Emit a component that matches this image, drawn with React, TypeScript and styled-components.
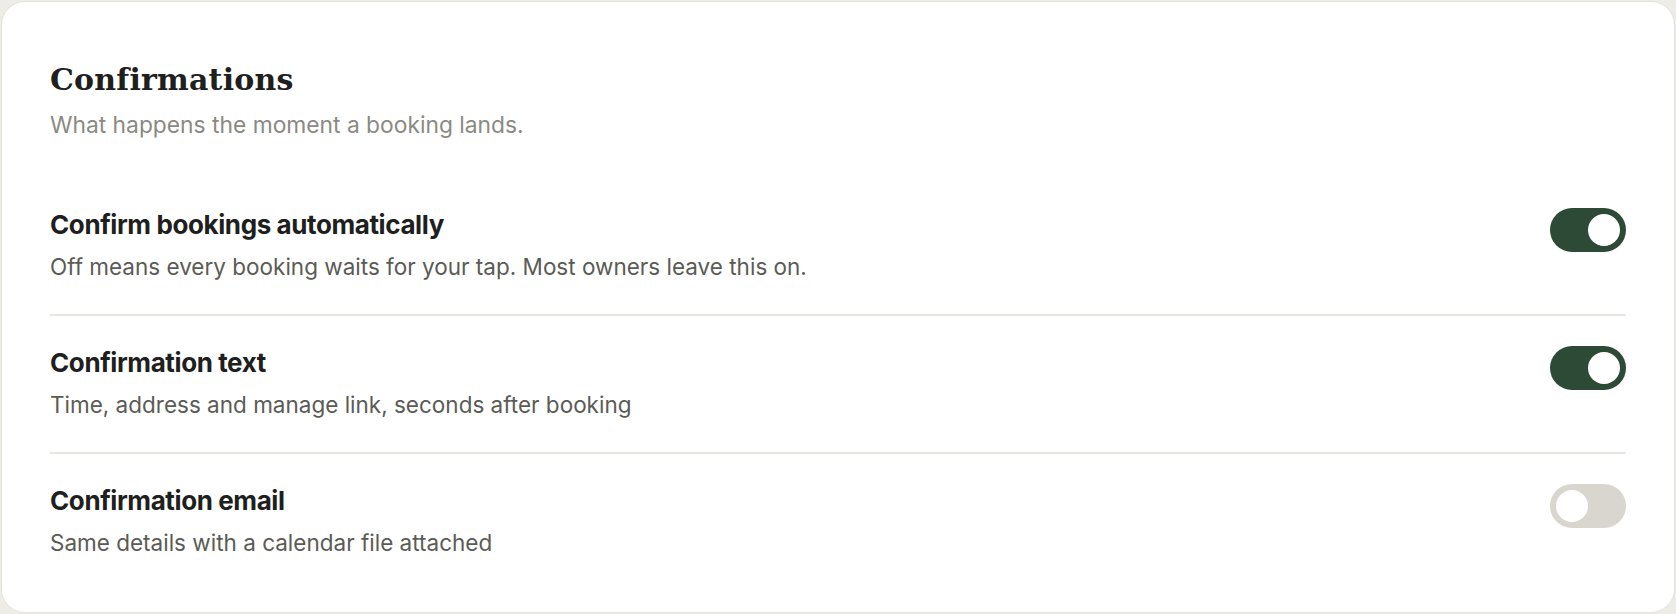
import React, { useState } from 'react';
import styled, { createGlobalStyle } from 'styled-components';

const GlobalStyle = createGlobalStyle`
  html, body {
    margin: 0;
    padding: 0;
    background: #edece7;
  }
  body {
    font-family: Inter, "Noto Sans", sans-serif;
    -webkit-font-smoothing: antialiased;
  }
`;

type Setting = {
  id: string;
  title: string;
  hint: string;
  on: boolean;
};

const initialSettings: Setting[] = [
  {
    id: 'auto',
    title: 'Confirm bookings automatically',
    hint: 'Off means every booking waits for your tap. Most owners leave this on.',
    on: true,
  },
  {
    id: 'text',
    title: 'Confirmation text',
    hint: 'Time, address and manage link, seconds after booking',
    on: true,
  },
  {
    id: 'email',
    title: 'Confirmation email',
    hint: 'Same details with a calendar file attached',
    on: false,
  },
];

export default function App() {
  const [settings, setSettings] = useState(initialSettings);

  const toggle = (id: string) => {
    setSettings((prev) => prev.map((s) => (s.id === id ? { ...s, on: !s.on } : s)));
  };

  return (
    <>
      <GlobalStyle />
      <Page>
        <Card>
          <Heading>Confirmations</Heading>
          <Subheading>What happens the moment a booking lands.</Subheading>
          <List>
            {settings.map((s) => (
              <Row key={s.id}>
                <RowText>
                  <RowTitle>{s.title}</RowTitle>
                  <RowHint>{s.hint}</RowHint>
                </RowText>
                <Switch
                  type="button"
                  role="switch"
                  aria-checked={s.on}
                  $on={s.on}
                  onClick={() => toggle(s.id)}
                >
                  <Knob />
                </Switch>
              </Row>
            ))}
          </List>
        </Card>
      </Page>
    </>
  );
}

const Page = styled.div`
  padding: 1px;
  height: 100vh;
  box-sizing: border-box;
  display: flex;
`;

const Card = styled.section`
  flex: 1;
  box-sizing: border-box;
  background: #ffffff;
  border: 1px solid #e3e2dc;
  border-radius: 24px;
  padding: 60px 48px 20px;
  display: flex;
  flex-direction: column;
`;

const Heading = styled.h2`
  margin: 0;
  font-family: "DejaVu Serif", "Liberation Serif", serif;
  font-weight: 700;
  font-size: 30px;
  line-height: 36px;
  letter-spacing: 0.2px;
  color: #1e201d;
`;

const Subheading = styled.p`
  margin: 12px 0 0;
  font-size: 22.8px;
  line-height: 30px;
  color: #8a8a83;
`;

const List = styled.div`
  margin-top: 38px;
  display: flex;
  flex-direction: column;
`;

const Row = styled.div`
  display: flex;
  align-items: flex-start;
  justify-content: space-between;
  gap: 24px;
  padding: 31px 0 32px;

  & + & {
    border-top: 2px solid #e7e6e0;
  }
`;

const RowText = styled.div`
  display: flex;
  flex-direction: column;
`;

const RowTitle = styled.h3`
  margin: 0;
  font-size: 26px;
  line-height: 32px;
  font-weight: 700;
  letter-spacing: -0.4px;
  color: #1e201d;
`;

const RowHint = styled.p`
  margin: 11px 0 0;
  font-size: 22.5px;
  line-height: 30px;
  color: #5b5b56;
`;

const Switch = styled.button<{ $on: boolean }>`
  flex: none;
  width: 76px;
  height: 44px;
  margin-top: -1px;
  padding: 6px;
  border: none;
  border-radius: 22px;
  background: ${(p) => (p.$on ? '#2d4a36' : '#d8d6cf')};
  display: flex;
  justify-content: ${(p) => (p.$on ? 'flex-end' : 'flex-start')};
  cursor: pointer;
  box-sizing: border-box;
`;

const Knob = styled.span`
  width: 32px;
  height: 32px;
  border-radius: 50%;
  background: #ffffff;
`;
